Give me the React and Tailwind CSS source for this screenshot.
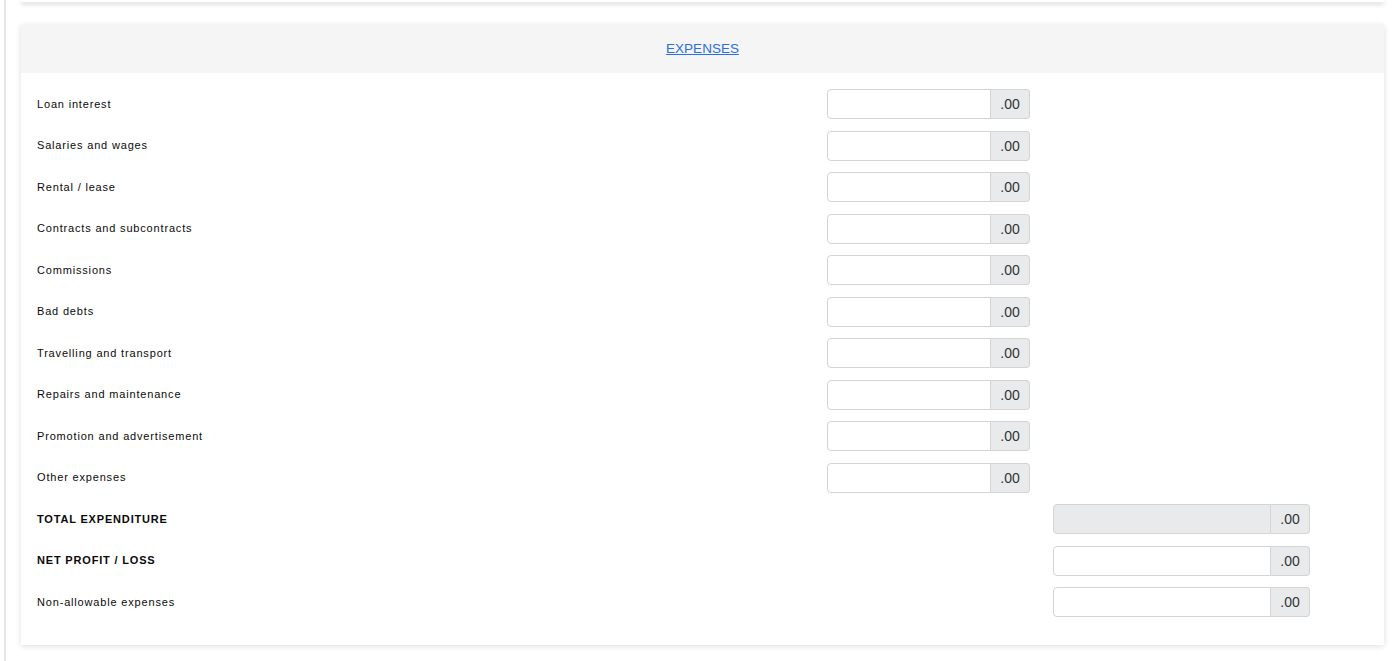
import React from 'react';

const expenseRows = [
  'Loan interest',
  'Salaries and wages',
  'Rental / lease',
  'Contracts and subcontracts',
  'Commissions',
  'Bad debts',
  'Travelling and transport',
  'Repairs and maintenance',
  'Promotion and advertisement',
  'Other expenses',
];

const summaryRows = [
  { label: 'TOTAL EXPENDITURE', bold: true, disabled: true },
  { label: 'NET PROFIT / LOSS', bold: true },
  { label: 'Non-allowable expenses' },
];

const AmountInput = ({ wide, disabled }) => (
  <div className={`flex h-[30px] ${wide ? 'w-[257px]' : 'w-[203px]'}`}>
    <input
      type="text"
      disabled={disabled}
      className={`flex-1 min-w-0 h-full border border-[#d4d4d4] rounded-l-[4px] px-2 text-[14px] outline-none ${
        disabled ? 'bg-[#e8eaec]' : 'bg-white'
      }`}
    />
    <span className="w-[39px] h-full flex items-center justify-center bg-[#e8eaec] border border-l-0 border-[#d4d4d4] rounded-r-[4px] text-[14px] text-[#333] pt-[1px]">
      .00
    </span>
  </div>
);

const Row = ({ label, bold, wide, disabled }) => (
  <div className="flex items-center">
    <label
      className={`shrink-0 text-[11px] tracking-[0.075em] text-[#0a0a0a] ${bold ? 'font-bold' : ''} ${
        wide ? 'w-[1016px]' : 'w-[790px]'
      }`}
    >
      {label}
    </label>
    <AmountInput wide={wide} disabled={disabled} />
  </div>
);

export default function App() {
  return (
    <div
      className="min-h-screen bg-white pl-[4px]"
      style={{ fontFamily: '"Liberation Sans", Arial, sans-serif' }}
    >
      <div className="min-h-[661px] border-l-2 border-[#e3e6e6] pl-[15px] pr-[16px]">
        {/* bottom of previous card */}
        <div className="h-[2px] bg-white rounded-b-[3px] shadow-[0_2px_4px_rgba(0,0,0,0.25)]" />

        <div className="mt-[23px] bg-white shadow-[0_1px_6px_rgba(0,0,0,0.14)]">
          <div className="h-[48px] bg-[#f5f5f5] flex items-center justify-center">
            <a href="#" className="text-[13.5px] text-[#2a6ee8] underline">
              EXPENSES
            </a>
          </div>

          <div className="px-4 pt-[16px] pb-[28px] flex flex-col gap-[11.5px]">
            {expenseRows.map((label) => (
              <Row key={label} label={label} />
            ))}
            {summaryRows.map((r) => (
              <Row key={r.label} label={r.label} bold={r.bold} disabled={r.disabled} wide />
            ))}
          </div>
        </div>
      </div>
    </div>
  );
}
